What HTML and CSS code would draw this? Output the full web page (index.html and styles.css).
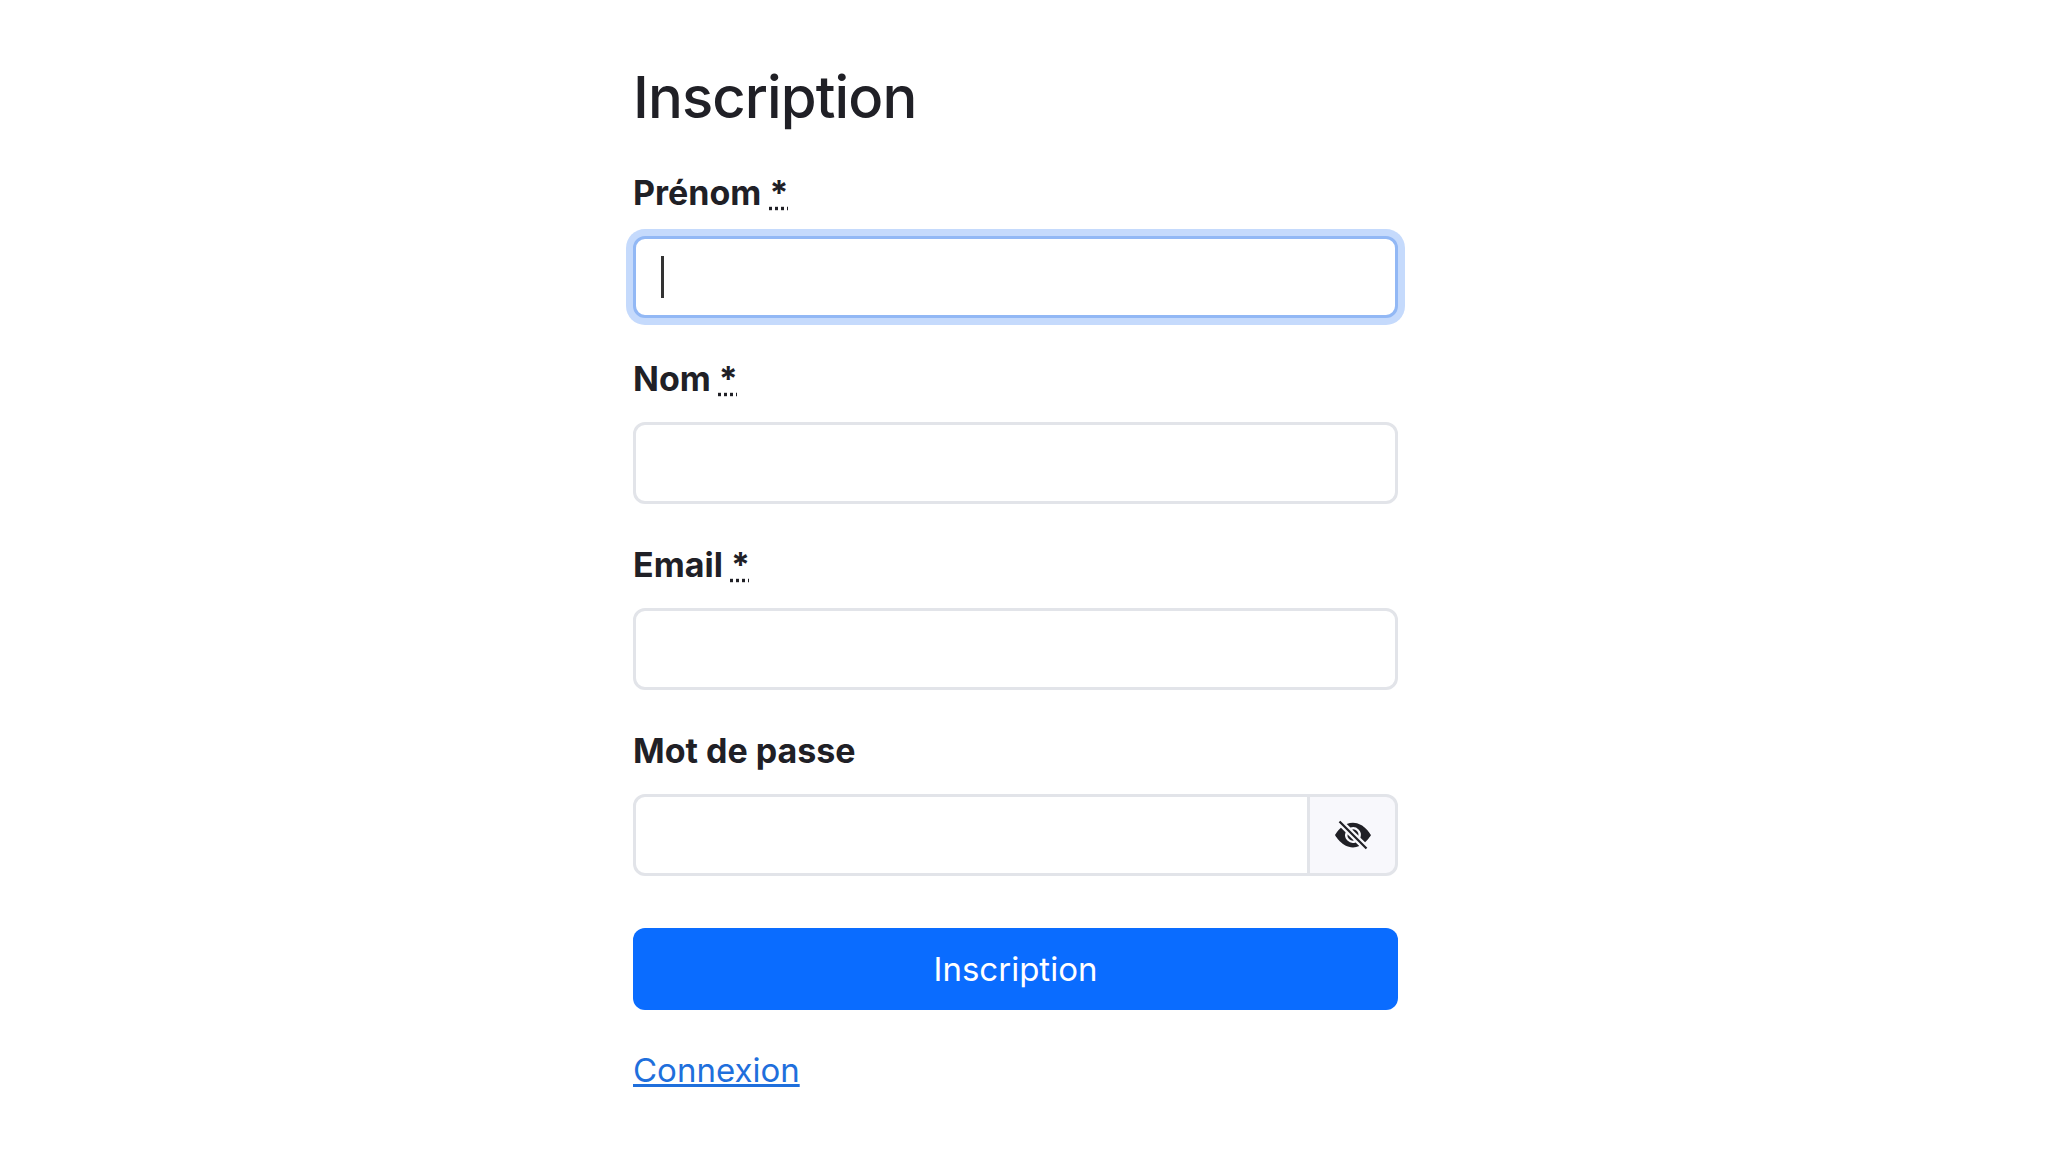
FILE: index.html
```html
<!DOCTYPE html>
<html lang="fr">
<head>
    <meta charset="UTF-8">
    <title>Inscription</title>
    <link rel="stylesheet" href="styles.css">
</head>
<body>
<div class="container">
    <h1>Inscription</h1>
    <form>
        <!-- Prénom -->
        <div class="form-group">
            <label for="firstName">Prénom <abbr title="obligatoire">*</abbr></label>
            <div class="field">
                <input type="text" id="firstName" class="focused">
                <span class="caret"></span>
            </div>
        </div>

        <!-- Nom -->
        <div class="form-group">
            <label for="lastName">Nom <abbr title="obligatoire">*</abbr></label>
            <input type="text" id="lastName">
        </div>

        <!-- Email -->
        <div class="form-group">
            <label for="email">Email <abbr title="obligatoire">*</abbr></label>
            <input type="text" id="email">
        </div>

        <!-- Mot de passe -->
        <div class="form-group">
            <label for="password">Mot de passe</label>
            <div class="input-group">
                <input type="password" id="password">
                <button type="button" class="toggle" aria-label="Afficher">
                    <svg width="36" height="36" viewBox="0 0 16 16" fill="currentColor">
                        <path d="m10.79 12.912-1.614-1.615a3.5 3.5 0 0 1-4.474-4.474l-2.06-2.06C.938 6.278 0 8 0 8s3 5.5 8 5.5a7.029 7.029 0 0 0 2.79-.588zM5.21 3.088A7.028 7.028 0 0 1 8 2.5c5 0 8 5.5 8 5.5s-.939 1.721-2.641 3.238l-2.062-2.062a3.5 3.5 0 0 0-4.474-4.474L5.21 3.089z"/>
                        <path d="M5.525 7.646a2.5 2.5 0 0 0 2.829 2.829l-2.83-2.829zm4.95.708-2.829-2.83a2.5 2.5 0 0 1 2.829 2.829zm3.171 6-12-12 .708-.708 12 12-.708.708z"/>
                    </svg>
                </button>
            </div>
        </div>

        <button type="submit" class="submit">Inscription</button>
    </form>
    <a href="#" class="login-link">Connexion</a>
</div>
</body>
</html>
```

FILE: styles.css
```css
/* Sign-up form */
body {
  margin: 0;
  background-color: #fff;
  color: #212529;
  font-family: Inter, "Liberation Sans", sans-serif;
}
.container {
  width: 765px;
  margin-left: 633px;
  padding-top: 61px;
}
h1 {
  margin: 0 0 39px;
  font-size: 58px;
  line-height: 72px;
  font-weight: 500;
  letter-spacing: -0.9px;
  color: #202026;
}
.form-group {
  margin-bottom: 40px;
}
.form-group:nth-child(4) {
  margin-bottom: 52px;
}
label {
  display: block;
  margin-bottom: 22px;
  font-size: 34px;
  line-height: 42px;
  font-weight: 700;
  color: #202026;
}
abbr {
  text-decoration: underline dotted;
  text-decoration-skip-ink: none;
}
.field {
  position: relative;
}
input {
  display: block;
  width: 100%;
  height: 82px;
  padding: 0 28px;
  border: 3px solid #e2e4e9;
  border-radius: 12px;
  box-sizing: border-box;
  background: #fff;
  font-family: inherit;
  font-size: 34px;
  outline: none;
}
input.focused {
  border-color: #92b8f5;
  box-shadow: 0 0 0 7px #c5dafc;
}
.caret {
  position: absolute;
  left: 28px;
  top: 20px;
  width: 3px;
  height: 42px;
  background: #333;
}
.input-group {
  display: flex;
}
.input-group input {
  flex: 1;
  min-width: 0;
  border-radius: 12px 0 0 12px;
}
.toggle {
  display: flex;
  align-items: center;
  justify-content: center;
  width: 91px;
  height: 82px;
  margin-left: -3px;
  padding: 0;
  border: 3px solid #e2e4e9;
  border-radius: 0 12px 12px 0;
  background: #f8f8fc;
  color: #202026;
}
.submit {
  display: block;
  width: 100%;
  height: 82px;
  border: none;
  border-radius: 12px;
  background-color: #0a6cff;
  color: #fff;
  font-family: inherit;
  font-size: 33px;
}
.login-link {
  display: inline-block;
  margin-top: 37px;
  color: #1f6fdc;
  font-size: 33px;
  line-height: 46px;
}
```
